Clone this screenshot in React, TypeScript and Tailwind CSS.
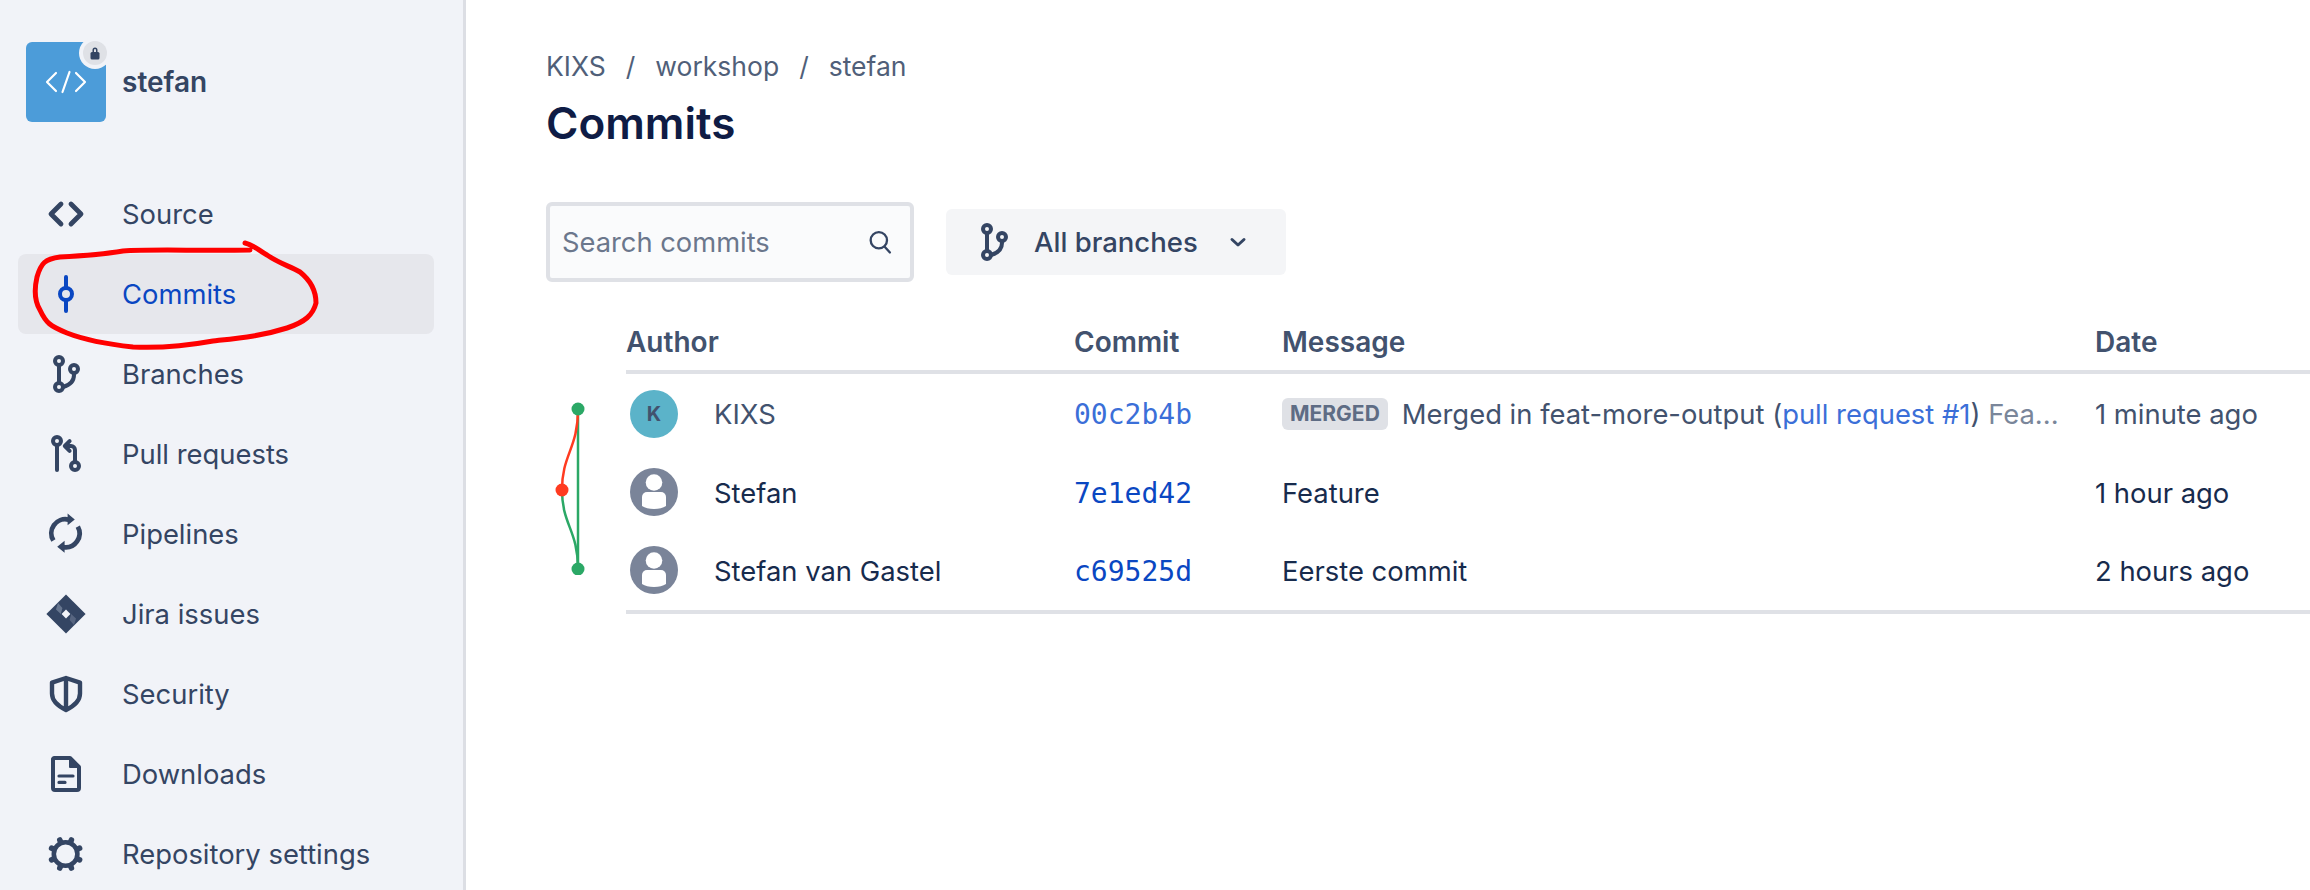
import type { ReactNode } from 'react';

const Glyph = ({ children, className = 'text-[#344563]' }: { children: ReactNode; className?: string }) => (
  <svg viewBox="0 0 24 24" fill="none" stroke="currentColor" strokeWidth="2" strokeLinecap="round" strokeLinejoin="round" className={`w-12 h-12 shrink-0 ${className}`}>
    {children}
  </svg>
);

const BranchIcon = () => (
  <>
    <circle cx="8.500" cy="5.500" r="2" />
    <circle cx="8.500" cy="18.500" r="2" />
    <circle cx="16" cy="9.500" r="2" />
    <path d="M8.500 7.500v9" />
    <path d="M16 11.500v1c0 3-2 5-5.500 6" />
  </>
);

const navItems: { label: string; active?: boolean; icon: ReactNode }[] = [
  {
    label: 'Source',
    icon: <path strokeWidth="2.400" d="M9.500 7l-5 5 5 5M14.500 7l5 5-5 5" />,
  },
  {
    label: 'Commits',
    active: true,
    icon: (
      <>
        <circle cx="12" cy="12" r="3" />
        <path d="M12 3.500V9M12 15v5.500" />
      </>
    ),
  },
  { label: 'Branches', icon: <BranchIcon /> },
  {
    label: 'Pull requests',
    icon: (
      <>
        <circle cx="7.500" cy="5.500" r="2" />
        <path d="M7.500 7.500V20" />
        <circle cx="16.500" cy="18" r="2" />
        <path d="M16.500 16v-6a2 2 0 0 0-2-2H12" />
        <path d="M13.800 5.600L11.400 8l2.400 2.400" />
      </>
    ),
  },
  {
    label: 'Pipelines',
    icon: (
      <>
        <path strokeWidth="2.400" strokeLinecap="butt" d="M5.700 15.300A7 7 0 0 1 13.200 4.800" />
        <path strokeWidth="2.400" strokeLinecap="butt" d="M17.900 8.300A7 7 0 0 1 10.700 18.600" />
        <path fill="currentColor" stroke="none" d="M12.800 1.800L16.400 4.700 12.800 7.600zM11.300 15.400L7.600 18.400l3.700 3z" />
      </>
    ),
  },
  {
    label: 'Jira issues',
    icon: (
      <>
        <path fill="currentColor" stroke="none" d="M12 2.200L21.800 12 12 21.800 2.200 12z" />
        <path fill="#f1f3f8" stroke="none" d="M12 9.800l2.200 2.200-2.200 2.200L9.800 12z" />
        <path fill="#8b97ad" stroke="none" opacity="0.6" d="M8 6.500l2.200 2.500-.8 3-2.400-2.200z" />
        <path fill="#8b97ad" stroke="none" opacity="0.4" d="M16 17.500l-2.200-2.500.8-3 2.400 2.200z" />
      </>
    ),
  },
  {
    label: 'Security',
    icon: <path strokeWidth="2.200" d="M12 4l7 2.300v5.500c0 3.600-2.800 6.200-7 8.200-4.200-2-7-4.600-7-8.200V6.300zM12 4v16" />,
  },
  {
    label: 'Downloads',
    icon: (
      <>
        <path d="M6 4h8l4.500 4.500V19a1 1 0 0 1-1 1H6.500a1 1 0 0 1-1-1V4.500z" />
        <path fill="currentColor" strokeWidth="1" d="M14 4l4.500 4.500H14z" />
        <path strokeWidth="1.600" d="M8.500 13h7M8.500 16.200h3" />
      </>
    ),
  },
  {
    label: 'Repository settings',
    icon: (
      <>
        <circle cx="11.800" cy="12" r="5.900" strokeWidth="2.300" />
        <path
          strokeWidth="2.800"
          d="M14.300 6l.4-1M9.300 6l-.4-1M14.300 18l.4 1M9.300 18l-.4 1M17.800 9.500l1-.4M5.800 9.500l-1-.4M17.800 14.500l1 .4M5.800 14.500l-1 .4"
        />
      </>
    ),
  },
];

const PersonAvatar = () => (
  <svg viewBox="0 0 48 48" className="w-12 h-12 shrink-0">
    <circle cx="24" cy="24" r="24" fill="#7a8499" />
    <circle cx="24" cy="14.500" r="8.300" fill="#fff" />
    <path fill="#fff" d="M12 29a5 5 0 0 1 5-5h14a5 5 0 0 1 5 5v9c-3 2-7 3-12 3s-9-1-12-3z" />
  </svg>
);

const Sidebar = () => (
  <aside className="w-[466px] shrink-0 h-full bg-[#f1f3f8] border-r-[3px] border-[#dcdee4] pl-[18px] pt-[42px] overflow-hidden">
    <div className="flex items-center gap-4 pl-2">
      <div className="relative w-20 h-20 rounded-md bg-[#4c9cd9] flex items-center justify-center">
        <svg viewBox="0 0 42 24" fill="none" stroke="#fff" strokeWidth="2.200" strokeLinecap="round" strokeLinejoin="round" className="w-[42px] h-6">
          <path d="M11 3L2 12l9 9M31 3l9 9-9 9M24.500 2l-7 20" />
        </svg>
        <div className="absolute -top-[1px] -right-[1px] w-[24px] h-[24px] rounded-full bg-[#dfe1e6] ring-4 ring-[#f1f3f8] flex items-center justify-center">
          <svg viewBox="0 0 16 16" className="w-4 h-4" fill="#344563">
            <path d="M5.500 7V5a2.500 2.500 0 0 1 5 0v2h-1.500V5a1 1 0 0 0-2 0v2z" />
            <rect x="3.500" y="7" width="9" height="7.500" rx="1.500" />
          </svg>
        </div>
      </div>
      <span className="text-[28px] font-semibold text-[#344563]">stefan</span>
    </div>
    <nav className="mt-[52px] flex flex-col w-[416px]">
      {navItems.map((item) => (
        <div
          key={item.label}
          className={`h-20 shrink-0 flex items-center gap-8 pl-6 rounded-lg ${item.active ? 'bg-[#e6e7ec] text-[#0a47c2]' : 'text-[#344563]'}`}
        >
          <Glyph className={item.active ? 'text-[#0a47c2]' : 'text-[#344563]'}>{item.icon}</Glyph>
          <span className="pt-[2px] text-[27.4px]">{item.label}</span>
        </div>
      ))}
    </nav>
  </aside>
);

const rows = [
  { author: 'Stefan', hash: '7e1ed42', message: 'Feature', date: '1 hour ago' },
  { author: 'Stefan van Gastel', hash: 'c69525d', message: 'Eerste commit', date: '2 hours ago' },
];

const gridCols = 'grid grid-cols-[448px_208px_813px_1fr] items-center';

const CommitGraph = () => (
  <svg viewBox="0 0 80 180" className="w-20 h-[180px] shrink-0 mt-[82px]" fill="none" strokeWidth="2.500">
    <path stroke="#2ba866" d="M32 14v160" />
    <path stroke="#ff3b20" d="M32 14c0 40-16 45-16 81" />
    <path stroke="#2ba866" d="M16 95c0 35 16 40 16 79" />
    <circle cx="32" cy="14" r="6.500" fill="#2ba866" />
    <circle cx="16" cy="95" r="6.500" fill="#ff3b20" />
    <circle cx="32" cy="174" r="6.500" fill="#2ba866" />
  </svg>
);

const Main = () => (
  <main className="flex-1 min-w-0 pl-20 pt-[48px] overflow-hidden">
    <div className="flex items-center text-[26.500px] leading-9 text-[#505f79]">
      <span>KIXS</span>
      <span className="mx-5">/</span>
      <span>workshop</span>
      <span className="mx-5">/</span>
      <span>stefan</span>
    </div>
    <h1 className="mt-[7px] text-[44px] leading-[64px] font-semibold text-[#0f1c45]">Commits</h1>

    <div className="mt-[47px] flex items-center gap-8">
      <div className="w-[368px] h-[80px] rounded-md border-4 border-[#dfe1e6] bg-[#fafbfc] flex items-center justify-between pl-3 pr-4">
        <span className="pt-[3px] text-[27.300px] text-[#6b778c]">Search commits</span>
        <svg viewBox="0 0 24 24" fill="none" stroke="#344563" strokeWidth="2" strokeLinecap="round" className="w-7 h-7">
          <circle cx="11" cy="10.500" r="7" />
          <path d="M16 16l4.500 5" />
        </svg>
      </div>
      <div className="w-[340px] h-[66px] rounded-md bg-[#f4f5f7] flex items-center pl-6 text-[#344563]">
        <svg viewBox="0 0 24 24" fill="none" stroke="currentColor" strokeWidth="2" strokeLinecap="round" className="w-12 h-12 shrink-0">
          <BranchIcon />
        </svg>
        <span className="ml-4 pt-[2px] text-[27.500px] font-medium">All branches</span>
        <svg viewBox="0 0 24 24" fill="none" stroke="currentColor" strokeWidth="3" strokeLinecap="round" strokeLinejoin="round" className="w-6 h-6 ml-7">
          <path d="M6 9.500l6 5.500 6-5.500" />
        </svg>
      </div>
    </div>

    <div className="flex mt-[31px]">
      <CommitGraph />
      <div className="flex-1 min-w-0">
        <div className={`${gridCols} h-[61px] border-b-4 border-[#dfe1e6] text-[28px] font-semibold text-[#42526e]`}>
          <span>Author</span>
          <span>Commit</span>
          <span>Message</span>
          <span>Date</span>
        </div>
        <div className={`${gridCols} mt-px h-[78px] text-[27.400px] text-[#42526e]`}>
          <div className="flex items-center gap-9 pl-1">
            <div className="w-12 h-12 rounded-full bg-[#5bb3c9] flex items-center justify-center text-[20px] font-bold text-[#42526e]">K</div>
            <span className="pt-[2px]">KIXS</span>
          </div>
          <span className="pt-[2px] font-['DejaVu_Sans_Mono',monospace] text-[28px] text-[#3b6fd8]">00c2b4b</span>
          <div className="flex items-center gap-[14px] min-w-0 whitespace-nowrap">
            <span className="shrink-0 h-8 px-2 rounded-md bg-[#dfe1e6] text-[21px] leading-8 font-bold text-[#5e6c84]">MERGED</span>
            <span className="pt-[2px]">
              Merged in feat-more-output (<span className="text-[#3b6fd8]">pull request #1</span>) <span className="text-[#7a869a]">Fea...</span>
            </span>
          </div>
          <span className="pt-[2px]">1 minute ago</span>
        </div>
        {rows.map((row) => (
          <div key={row.hash} className={`${gridCols} h-[78px] text-[27.400px] text-[#172b4d]`}>
            <div className="flex items-center gap-9 pl-1">
              <PersonAvatar />
              <span className="pt-[3px]">{row.author}</span>
            </div>
            <span className="pt-[3px] font-['DejaVu_Sans_Mono',monospace] text-[28px] text-[#0a47c2]">{row.hash}</span>
            <span className="pt-[3px]">{row.message}</span>
            <span className="pt-[3px]">{row.date}</span>
          </div>
        ))}
        <div className="mt-px h-1 bg-[#dfe1e6]" />
      </div>
    </div>
  </main>
);

const Annotation = () => (
  <svg viewBox="0 0 330 120" className="absolute left-0 top-[230px] w-[330px] h-[120px] pointer-events-none" fill="none" stroke="#ff0000" strokeWidth="5" strokeLinecap="round" strokeLinejoin="round">
    <path d="M250 20C200 21 150 19 123 21C100 25 80 26 60 27C45 29 41 33 37 47C34 60 34 70 40 80C46 93 50 96 67 103C85 110 105 114 133 117C155 118 180 117 213 111C240 108 262 106 287 98C305 92 313 85 316 73C316 60 310 50 300 42C290 36 280 34 267 25C258 20 254 15 245 13" />
  </svg>
);

export default function App() {
  return (
    <div className="relative flex w-[2310px] h-[890px] overflow-hidden bg-white font-['Inter',sans-serif]">
      <Sidebar />
      <Main />
      <Annotation />
    </div>
  );
}
